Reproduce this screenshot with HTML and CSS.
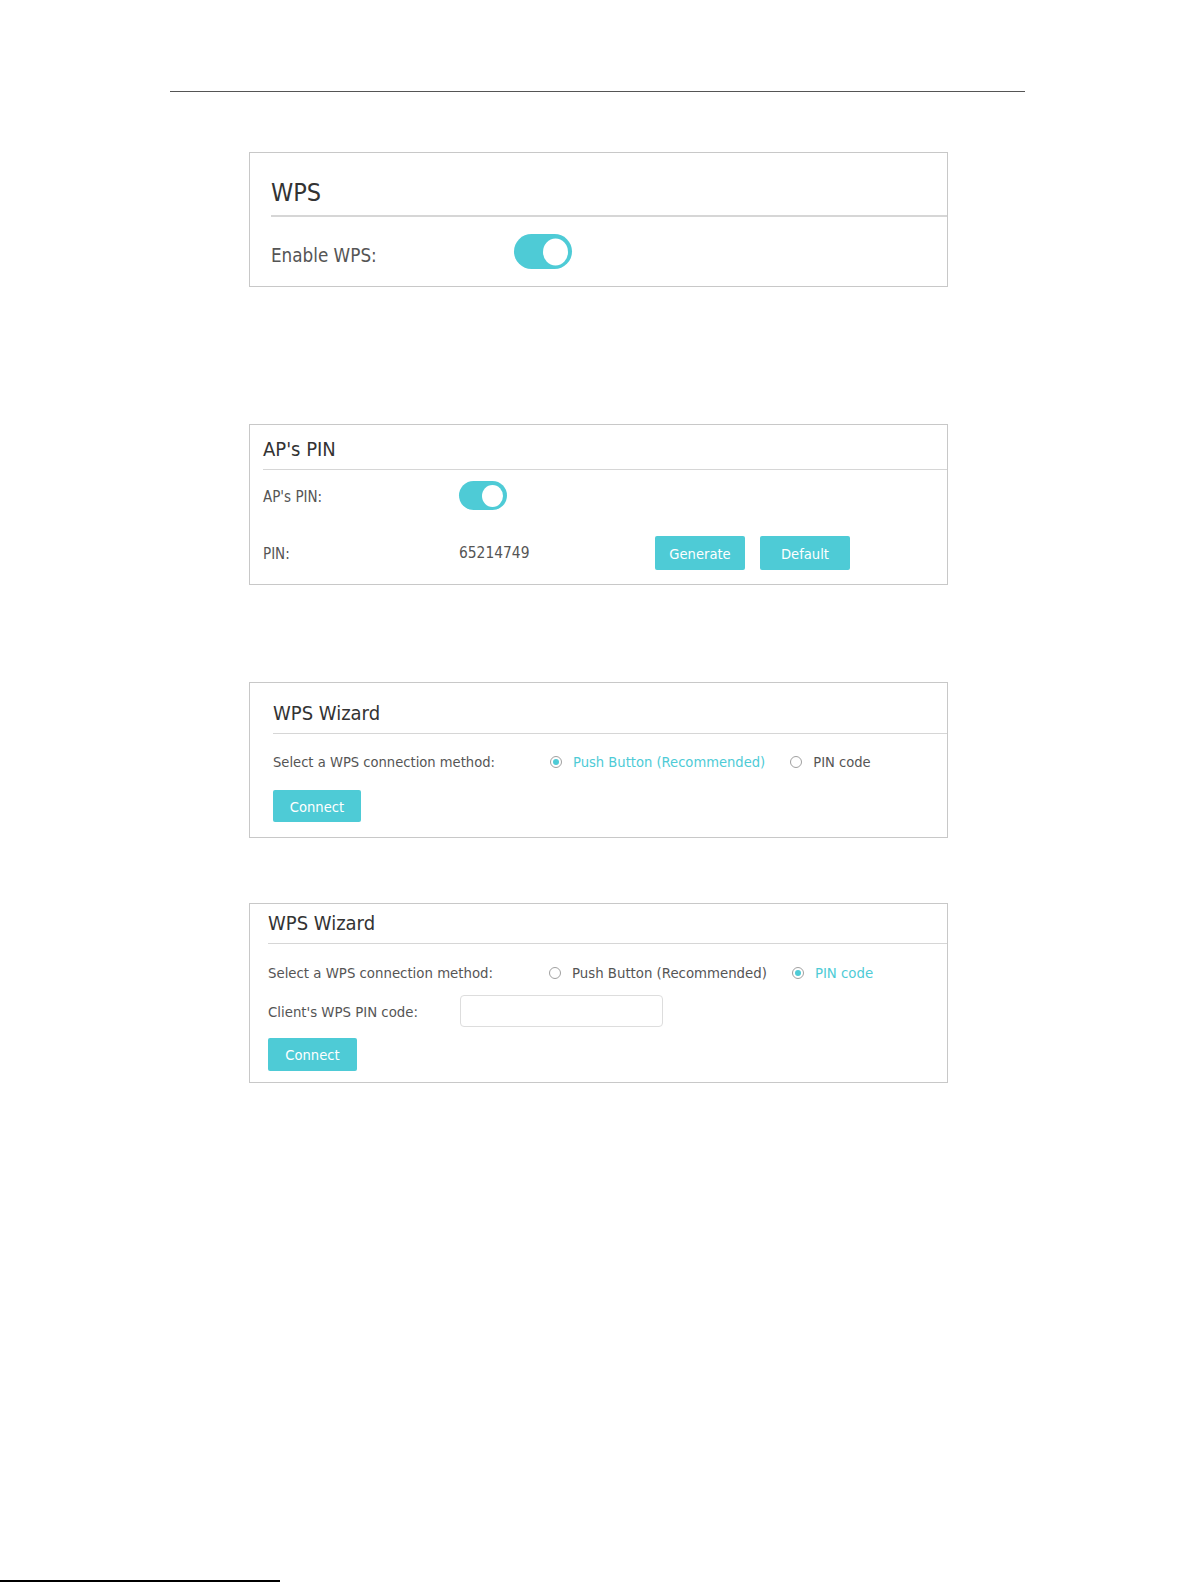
FILE: index.html
```html
<!DOCTYPE html>
<html lang="en">

<head>
    <meta charset="UTF-8" />
    <title>WPS</title>
    <link rel="stylesheet" href="styles.css">
</head>

<body>

    <div class="top-rule"></div>

    <div class="cards">

        <!-- WPS on/off -->
        <div class="card card-wps">
            <div class="card-head">
                <h2>WPS</h2>
            </div>
            <div class="row">
                <span class="label">Enable WPS:</span>
                <span class="toggle on"><span class="knob"></span></span>
            </div>
        </div>

        <!-- router PIN -->
        <div class="card card-pin">
            <div class="card-head">
                <h3>AP's PIN</h3>
            </div>
            <div class="row row-toggle">
                <span class="label">AP's PIN:</span>
                <span class="toggle on"><span class="knob"></span></span>
            </div>
            <div class="row row-pin">
                <span class="label">PIN:</span>
                <span class="value">65214749</span>
                <button class="btn">Generate</button>
                <button class="btn">Default</button>
            </div>
        </div>

        <!-- wizard, push button selected -->
        <div class="card card-wizard">
            <div class="card-head">
                <h3>WPS Wizard</h3>
            </div>
            <div class="row">
                <span class="label">Select a WPS connection method:</span>
                <label class="radio checked"><span class="dot"></span>Push Button (Recommended)</label>
                <label class="radio"><span class="dot"></span>PIN code</label>
            </div>
            <button class="btn">Connect</button>
        </div>

        <!-- wizard, PIN code selected -->
        <div class="card card-wizard-pin">
            <div class="card-head">
                <h3>WPS Wizard</h3>
            </div>
            <div class="row">
                <span class="label">Select a WPS connection method:</span>
                <label class="radio"><span class="dot"></span>Push Button (Recommended)</label>
                <label class="radio checked"><span class="dot"></span>PIN code</label>
            </div>
            <div class="row row-input">
                <span class="label">Client's WPS PIN code:</span>
                <input type="text" class="field" />
            </div>
            <button class="btn">Connect</button>
        </div>

    </div>

    <div class="bottom-rule"></div>

</body>

</html>
```

FILE: styles.css
```css
body {
    margin: 0;
    background: #fff;
    font-family: "DejaVu Sans", sans-serif;
    font-stretch: condensed;
    color: #555;
}

.top-rule {
    margin: 91px 0 0 170px;
    width: 855px;
    border-top: 1px solid #555;
}

.cards {
    margin-left: 249px;
    width: 699px;
}

.card {
    border: 1px solid #c8c8c8;
    box-sizing: border-box;
}

.card h2,
.card h3 {
    margin: 0;
    font-weight: normal;
    color: #333;
}

.card-head {
    border-bottom: 1px solid #d6d6d6;
}

.row {
    display: flex;
    align-items: center;
    font-size: 14.6px;
}

.label {
    flex: none;
}

.toggle {
    display: inline-block;
    position: relative;
    background: #4ecbd6;
    border-radius: 999px;
}

.toggle .knob {
    position: absolute;
    top: 50%;
    right: 4px;
    transform: translateY(-50%);
    background: #fff;
    border-radius: 50%;
}

.btn {
    background: #4ecbd6;
    color: #fff;
    border: none;
    border-radius: 2px;
    font-family: inherit;
    font-stretch: condensed;
    font-size: 14.6px;
    padding: 0;
    cursor: pointer;
}

.radio {
    display: inline-flex;
    align-items: center;
    color: #555;
}

.radio .dot {
    width: 12px;
    height: 12px;
    border: 1px solid #a0a0a0;
    border-radius: 50%;
    box-sizing: border-box;
    margin-right: 11px;
    display: inline-flex;
    align-items: center;
    justify-content: center;
}

.radio.checked {
    color: #4ecbd6;
}

.radio.checked .dot::after {
    content: "";
    width: 6px;
    height: 6px;
    border-radius: 50%;
    background: #4ecbd6;
}

.field {
    border: 1px solid #ddd;
    border-radius: 4px;
    box-sizing: border-box;
}

/* WPS switch card */
.card-wps {
    margin-top: 60px;
    height: 135px;
    padding-left: 21px;
}

.card-wps .card-head {
    padding: 25px 0 7px;
    border-bottom-width: 2px;
}

.card-wps h2 {
    font-size: 25px;
    line-height: 30px;
}

.card-wps .row {
    padding-top: 17px;
    font-size: 18.7px;
}

.card-wps .label {
    width: 243px;
    padding-top: 8px;
}

.card-wps .toggle {
    width: 58px;
    height: 35px;
}

.card-wps .knob {
    width: 25px;
    height: 27px;
}

/* AP's PIN card */
.card-pin {
    margin-top: 137px;
    height: 161px;
    padding-left: 13px;
}

.card-pin .card-head {
    padding: 12px 0 8px;
}

.card-pin h3 {
    font-size: 20px;
    line-height: 24px;
}

.card-pin .label {
    width: 196px;
    font-size: 15px;
    padding-top: 2px;
}

.card-pin .row-toggle {
    padding-top: 11px;
}

.card-pin .toggle {
    width: 48px;
    height: 29px;
}

.card-pin .knob {
    width: 21px;
    height: 22px;
}

.card-pin .row-pin {
    padding-top: 26px;
}

.card-pin .value {
    width: 196px;
    font-size: 15.4px;
}

.card-pin .btn {
    width: 90px;
    height: 34px;
    margin-right: 15px;
}

/* wizard cards */
.card-wizard {
    margin-top: 97px;
    height: 156px;
    padding-left: 23px;
}

.card-wizard .card-head {
    padding: 18px 0 8px;
}

.card-wizard h3,
.card-wizard-pin h3 {
    font-size: 20px;
    line-height: 24px;
}

.card-wizard .row {
    padding-top: 19px;
}

.card-wizard .label {
    width: 277px;
}

.card-wizard .radio,
.card-wizard-pin .radio {
    margin-right: 25px;
}

.card-wizard .btn {
    margin-top: 20px;
    width: 88px;
    height: 32px;
}

.card-wizard-pin {
    margin-top: 65px;
    height: 180px;
    padding-left: 18px;
}

.card-wizard-pin .card-head {
    padding: 7px 0 8px;
}

.card-wizard-pin .row {
    padding-top: 20px;
    font-size: 14.8px;
}

.card-wizard-pin .label {
    width: 281px;
}

.card-wizard-pin .row-input {
    padding-top: 14px;
}

.card-wizard-pin .row-input .label {
    width: 192px;
}

.card-wizard-pin .field {
    width: 203px;
    height: 32px;
}

.card-wizard-pin .btn {
    margin-top: 11px;
    width: 89px;
    height: 33px;
}

.bottom-rule {
    margin-top: 497px;
    width: 280px;
    border-top: 2px solid #000;
}
```
